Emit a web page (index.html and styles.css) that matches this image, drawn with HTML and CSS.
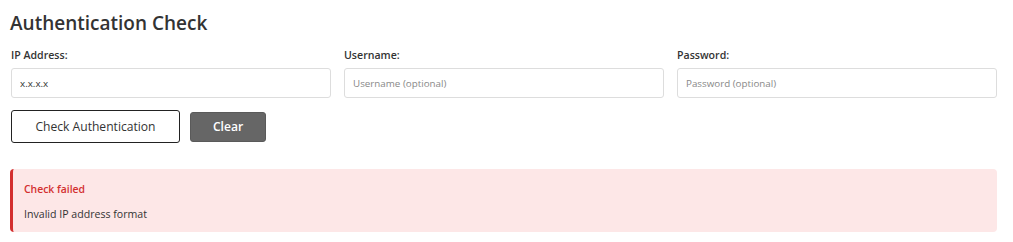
FILE: index.html
```html
<!DOCTYPE html>
<html lang="en">
<head>
    <meta charset="UTF-8">
    <meta name="viewport" content="width=device-width, initial-scale=1.0">
    <title>Authentication Check</title>
    <link rel="stylesheet" href="styles.css">
</head>
<body>

    <div class="container">
        <h1>Authentication Check</h1>

        <div class="fields">
            <div class="field">
                <label for="ipAddress">IP Address:</label>
                <input type="text" id="ipAddress" class="textbox" value="x.x.x.x">
            </div>
            <div class="field">
                <label for="username">Username:</label>
                <input type="text" id="username" class="textbox" placeholder="Username (optional)">
            </div>
            <div class="field">
                <label for="password">Password:</label>
                <input type="password" id="password" class="textbox" placeholder="Password (optional)">
            </div>
        </div>

        <div class="actions">
            <button class="check-button">Check Authentication</button>
            <button class="clear-button">Clear</button>
        </div>

        <!-- Result box -->
        <div class="result error">
            <p class="result-title">Check failed</p>
            <p class="result-message">Invalid IP address format</p>
        </div>
    </div>

</body>
</html>
```

FILE: styles.css
```css
/* Basic reset */
* {
    margin: 0;
    padding: 0;
    box-sizing: border-box;
}

body {
    background-color: #fff;
    font-family: "Open Sans", Arial, sans-serif;
    color: #333;
}

.container {
    width: 987px;
    margin-left: 10px;
    padding-top: 10px;
}

h1 {
    font-size: 19px;
    font-weight: 600;
    line-height: 26px;
    color: #333;
    margin-bottom: 11px;
}

/* Form fields */
.fields {
    display: grid;
    grid-template-columns: repeat(3, 1fr);
    gap: 13px;
    padding-left: 1px;
}

.field label {
    display: block;
    font-size: 10.6px;
    font-weight: 600;
    line-height: 16px;
    margin-bottom: 5px;
}

.textbox {
    width: 100%;
    height: 30px;
    border: 1px solid #ddd;
    border-radius: 3px;
    padding: 0 8px;
    font-family: inherit;
    font-size: 9.8px;
    color: #333;
}

.textbox::placeholder {
    color: #888;
}

/* Buttons */
.actions {
    display: flex;
    align-items: center;
    gap: 10px;
    margin-top: 12px;
    padding-left: 1px;
}

.check-button {
    width: 169px;
    height: 33px;
    background-color: #fff;
    color: #333;
    border: 1.5px solid #222;
    border-radius: 3px;
    font-family: inherit;
    font-size: 12.1px;
    cursor: pointer;
}

.clear-button {
    width: 76px;
    height: 30px;
    background-color: #666;
    color: #fff;
    border: 1px solid #5a5a5a;
    border-radius: 3px;
    font-family: inherit;
    font-size: 12.1px;
    font-weight: 600;
    cursor: pointer;
}

/* Result box */
.result {
    margin-top: 26px;
    height: 63px;
    padding: 12px 12px 0 11px;
    border-radius: 4px;
}

.result.error {
    background-color: #fde7e7;
    border-left: 3px solid #d32f2f;
}

.result-title {
    font-size: 10.4px;
    font-weight: 600;
    line-height: 16px;
    color: #d32f2f;
    margin-bottom: 9px;
}

.result-message {
    font-size: 10.6px;
    line-height: 16px;
    color: #333;
}
```
